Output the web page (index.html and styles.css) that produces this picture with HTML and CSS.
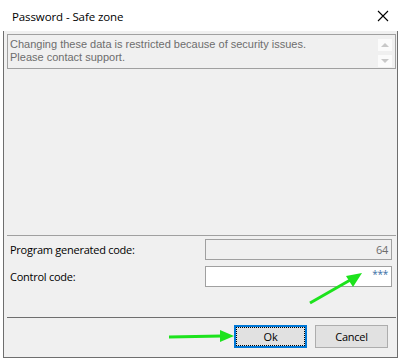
FILE: index.html
```html
<!DOCTYPE html>
<html lang="en">
<head>
  <meta charset="UTF-8">
  <title>Password - Safe zone</title>
  <link rel="stylesheet" href="styles.css">
</head>
<body>
  <div class="titlebar">
    <span class="title">Password - Safe zone</span>
    <svg class="close" width="12" height="12" viewBox="0 0 12 12">
      <path d="M1 1 L11 11 M11 1 L1 11" stroke="#000" stroke-width="1.1" fill="none"/>
    </svg>
  </div>

  <div class="frame">
    <div class="message">
      <div class="message-text">
        <div>Changing these data is restricted because of security issues.</div>
        <div>Please contact support.</div>
      </div>
      <div class="scroll">
        <div class="scroll-btn"><span class="arrow-up"></span></div>
        <div class="scroll-btn"><span class="arrow-down"></span></div>
      </div>
    </div>

    <div class="spacer"></div>

    <div class="fields">
      <div class="row">
        <label>Program generated code:</label>
        <div class="field readonly">64</div>
      </div>
      <div class="row">
        <label>Control code:</label>
        <div class="field editable"><span class="stars">***</span></div>
      </div>
    </div>

    <div class="buttons">
      <button class="btn default">Ok</button>
      <button class="btn">Cancel</button>
    </div>
  </div>

  <!-- annotation arrows -->
  <svg class="annotations" width="401" height="361" viewBox="0 0 401 361">
    <path d="M310 303 L352 279" stroke="#1de31d" stroke-width="3" fill="none"/>
    <polygon points="362,273 346,276 353,287" fill="#1de31d"/>
    <path d="M169 337 L222 336" stroke="#1de31d" stroke-width="3" fill="none"/>
    <polygon points="234,336 220,330 220,342" fill="#1de31d"/>
  </svg>
</body>
</html>
```

FILE: styles.css
```css
body {
  margin: 0;
  width: 401px;
  height: 361px;
  overflow: hidden;
  background-color: #ffffff;
  font-family: 'Open Sans', 'Noto Sans', sans-serif;
  font-size: 11px;
  letter-spacing: -0.25px;
  color: #000000;
  position: relative;
}
.titlebar {
  height: 31px;
  display: flex;
  align-items: center;
  justify-content: space-between;
  padding: 0 12px 0 12px;
  box-sizing: border-box;
}
.title {
  font-size: 11.5px;
  letter-spacing: -0.1px;
  margin-top: 1px;
}
.frame {
  margin-left: 3px;
  width: 395px;
  height: 327px;
  box-sizing: border-box;
  border: 1px solid #6e6e6e;
  border-top: none;
  background-color: #f0f0f0;
  display: flex;
  flex-direction: column;
  padding: 3px 1px 0 3px;
}
.message {
  height: 35px;
  box-sizing: border-box;
  border: 1px solid #a0a0a0;
  display: flex;
  justify-content: space-between;
}
.message-text {
  font-family: 'Liberation Sans', Arial, sans-serif;
  letter-spacing: 0;
  color: #6d6d6d;
  padding: 3px 0 0 2px;
  line-height: 13px;
}
.scroll {
  display: flex;
  flex-direction: column;
  gap: 2px;
  padding: 3px 2px 0 0;
}
.scroll-btn {
  width: 14px;
  height: 12px;
  background-color: #fbfbfb;
  border: 1px solid #f0f0f0;
  display: flex;
  align-items: center;
  justify-content: center;
}
.arrow-up {
  width: 0;
  height: 0;
  border-left: 4px solid transparent;
  border-right: 4px solid transparent;
  border-bottom: 4px solid #c8c8c8;
}
.arrow-down {
  width: 0;
  height: 0;
  border-left: 4px solid transparent;
  border-right: 4px solid transparent;
  border-top: 4px solid #c8c8c8;
}
.spacer {
  flex: 1;
}
.fields {
  border-top: 1px solid #a0a0a0;
  padding: 3px 4px 30px 0;
  display: flex;
  flex-direction: column;
  gap: 6px;
}
.row {
  display: flex;
  align-items: center;
  justify-content: space-between;
}
.row label {
  padding-left: 3px;
}
.field {
  width: 187px;
  height: 21px;
  box-sizing: border-box;
  border: 1px solid #a0a0a0;
  padding: 0 3px;
  display: flex;
  justify-content: flex-end;
}
.readonly {
  color: #6d6d6d;
  align-items: center;
}
.editable {
  background-color: #ffffff;
}
.stars {
  color: #3a6ea5;
  font-size: 10px;
  line-height: 10px;
  margin-top: 2px;
}
.buttons {
  border-top: 1px solid #6e6e6e;
  height: 40px;
  display: flex;
  justify-content: flex-end;
  align-items: flex-start;
  gap: 8px;
  padding: 7px 8px 0 0;
  box-sizing: border-box;
}
.btn {
  width: 73px;
  height: 23px;
  margin: 0;
  font-family: 'Open Sans', 'Noto Sans', sans-serif;
  font-size: 11px;
  letter-spacing: -0.25px;
  color: #000000;
  background-color: #e1e1e1;
  border: 1px solid #adadad;
  padding: 0;
}
.default {
  border-color: #0078d7;
  outline: 1px dotted #000000;
  outline-offset: -3px;
  box-shadow: inset 0 0 0 1px #0078d7;
}
.annotations {
  position: absolute;
  left: 0;
  top: 0;
  pointer-events: none;
}
```
